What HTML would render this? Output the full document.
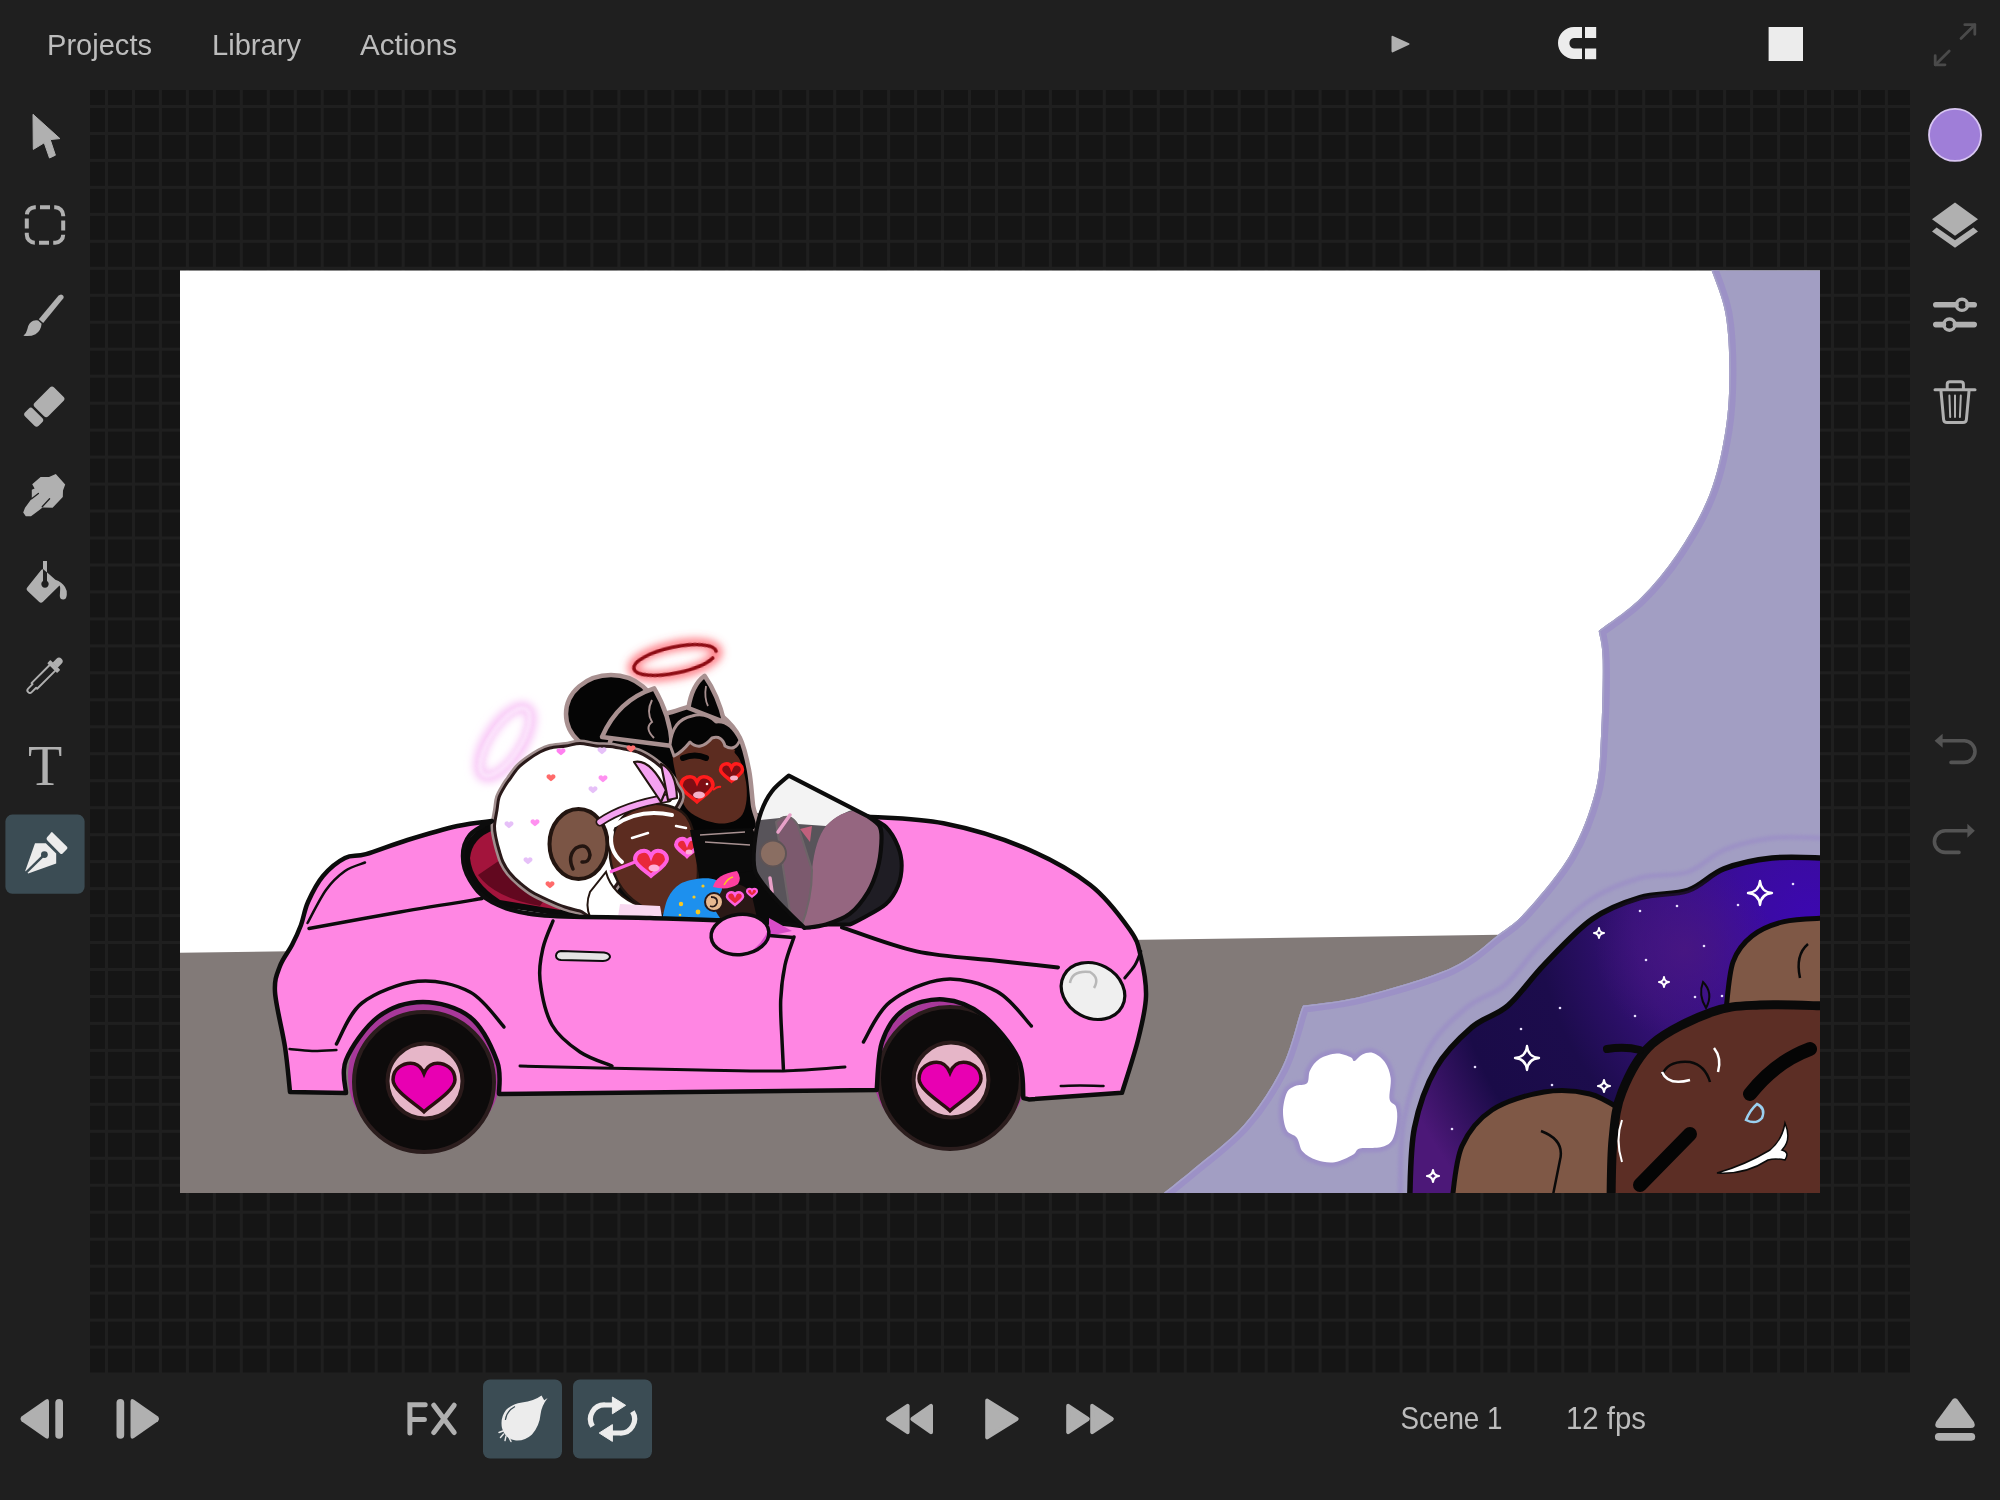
<!DOCTYPE html>
<html><head><meta charset="utf-8">
<style>
html,body{margin:0;padding:0;width:2000px;height:1500px;overflow:hidden;background:#1f1f1f;}
#grid{position:absolute;left:90px;top:90px;width:1820px;height:1283px;background-color:#151515;
background-image:linear-gradient(to right,#1f1f1f 3px,transparent 3px),linear-gradient(to bottom,#1f1f1f 3px,transparent 3px);
background-size:26.98px 26.98px;background-position:15px 15px;}
svg{position:absolute;left:0;top:0;}
text{font-family:"Liberation Sans",sans-serif;}
</style></head><body>
<div id="grid"></div>
<svg id="ui" width="2000" height="1500" viewBox="0 0 2000 1500">
  <defs><filter id="noop" x="0" y="0" width="1" height="1"><feColorMatrix type="identity"/></filter></defs>
  <!-- top menu -->
  <g fill="#bcbcbc" font-size="30" filter="url(#noop)">
    <text x="47" y="55" textLength="105" lengthAdjust="spacingAndGlyphs">Projects</text>
    <text x="212" y="55" textLength="89" lengthAdjust="spacingAndGlyphs">Library</text>
    <text x="360" y="55" textLength="97" lengthAdjust="spacingAndGlyphs">Actions</text>
  </g>
  <!-- top play -->
  <path d="M1393,36 Q1391.5,35 1391.5,37 L1391.5,51 Q1391.5,53 1393,52.3 L1409,44.8 Q1410.5,44 1409,43.2 Z" fill="#b0b0b0"/>
  <!-- magnet -->
  <g fill="#ececec">
    <path d="M1582,27 L1574,27 A16,16 0 0 0 1574,59 L1582,59 L1582,48.5 L1574,48.5 A5.3,5.3 0 0 1 1574,38 L1582,38 Z"/>
    <rect x="1585" y="27" width="11.2" height="11"/>
    <rect x="1585" y="48.5" width="11.2" height="10.7"/>
  </g>
  <!-- white square -->
  <rect x="1768.6" y="27" width="34.4" height="34" fill="#ececec"/>
  <!-- expand -->
  <g stroke="#4a4a4a" stroke-width="2.8" fill="none" stroke-linecap="round" stroke-linejoin="round">
    <path d="M1961,38.5 L1974.8,24.7"/><path d="M1964.8,24.7 L1974.8,24.7 L1974.8,34.3"/>
    <path d="M1949.2,51 L1935.4,64.8"/><path d="M1935.2,55.7 L1935.2,64.8 L1945,64.8"/>
  </g>

  <!-- left tools -->
  <g fill="#b0b0b0">
    <!-- arrow -->
    <path d="M33,114.3 L59.9,138.6 L50.2,139.6 L55.4,155.2 L49.5,158 L44.2,142.8 L33.3,149.4 Z" stroke="#b0b0b0" stroke-width="1" stroke-linejoin="round"/>
  </g>
  <!-- selection -->
  <rect x="26.8" y="207.2" width="36.4" height="35.6" rx="8" ry="8" fill="none" stroke="#b0b0b0" stroke-width="4" stroke-dasharray="14.57 4.2 10 4.2" stroke-dashoffset="13.57"/>
  <!-- brush -->
  <g fill="#b0b0b0">
    <path d="M61,294.4 Q64.2,295 63.6,298 L43.2,323 L38.8,319.2 L58.6,295.6 Z"/>
    <path d="M38.2,320.6 L41.6,323.8 Q41,331 35.5,334.2 Q30,337 23.4,335.7 Q26.5,333.6 27.4,329 Q28.6,322.6 33.2,320.8 Q36,319.6 38.2,320.6 Z"/>
  </g>
  <!-- eraser -->
  <g fill="#b0b0b0" transform="translate(44.3,406.6) rotate(-45)">
    <rect x="-7" y="-9.6" width="27.5" height="19.2" rx="3"/>
    <rect x="-20.5" y="-9.6" width="11" height="19.2" rx="3"/>
  </g>
  <!-- smudge -->
  <path fill="#b0b0b0" d="M55.8,474 L65.2,484.6 L63,490.6 L62.8,497 L52.6,507.8 L42.6,507.6 L31,516.2 L25.8,516.2 L23.2,512.6 L25,507.8 L31.8,498.6 L31.8,489.8 L34.6,488.6 L32.2,484.2 L40.6,477 L49,477 Z"/>
  <path d="M49.6,498.8 L42.2,506.8 M38.4,493.4 L31.6,498.8" stroke="#1f1f1f" stroke-width="1.3" stroke-linecap="round"/>
  <!-- bucket -->
  <g fill="#b0b0b0">
    <rect x="43" y="561" width="4" height="12"/>
    <path d="M41.4,569.8 Q42.6,568.6 43.8,569.6 L55.4,579.8 Q62,582 65,587 Q67.2,590.5 66.8,594.5 L66.6,596 Q66,599.5 63.2,599.5 Q60,599.5 59.8,596 L60.2,588.5 Q60.3,586.5 59.5,585.5 L43,601.8 Q41,603.6 39,601.8 L27.6,591 Q25.6,589 27.6,587 Z"/>
    <path d="M43,568.9 L47,572.4 L47,581 A3.7,3.7 0 1 1 43,581 Z" fill="#1f1f1f"/>
  </g>
  <!-- eyedropper -->
  <g transform="translate(44.85,675.45) rotate(-45)" fill="none" stroke="#b0b0b0">
    <path d="M10.8,-4 L-14.85,-4 L-14.85,-2.5 L-21.1,-2.5 A2.5,2.5 0 0 0 -21.1,2.5 L-14.85,2.5 L-14.85,4 L10.8,4" stroke-width="1.9" stroke-linejoin="round"/>
    <rect x="10.3" y="-7" width="4.5" height="14" rx="0.8" fill="#b0b0b0" stroke="none"/>
    <path d="M14.5,-3.6 L20,-3.6 A3.6,3.6 0 0 1 20,3.6 L14.5,3.6 Z" fill="#b0b0b0" stroke="none"/>
  </g>
  <!-- T -->
  <text x="45" y="784.5" text-anchor="middle" font-family="Liberation Serif" font-size="56" fill="#b0b0b0" style="font-family:'Liberation Serif',serif">T</text>
  <!-- pen selected -->
  <rect x="5.4" y="814.6" width="79.2" height="79.2" rx="7" fill="#3b4c54"/>
  <g fill="#ececec">
    <path d="M52,832 L67,846.8 Q68,848 67,849 L62.6,853.4 Q61.4,854.4 60.2,853.4 L47.4,840.6 Q45.8,839 47,837.2 L50,834 Q51,832 52,832 Z"/>
    <path d="M35,843.2 L45.8,843.2 L56.2,853.6 L56.2,863.6 L28.2,873.6 L25.2,871 Z"/>
  </g>
  <g stroke="#3b4c54" stroke-width="2.4" fill="#3b4c54">
    <path d="M26,872.6 L44.4,854.6" fill="none"/>
    <circle cx="44.4" cy="854.6" r="3.4" stroke="none"/>
  </g>

  <!-- right side -->
  <circle cx="1955" cy="134.9" r="26" fill="#9f7ed8" stroke="#d8c6f2" stroke-width="1.8"/>
  <g fill="#b0b0b0">
    <path d="M1955,202.6 L1978,219.2 L1955,235.8 L1932,219.2 Z"/>
    <path d="M1932,231.4 L1936.6,227.6 L1955,240.3 L1973.4,227.6 L1978,231.4 L1955,247.8 Z"/>
  </g>
  <g stroke="#b0b0b0" fill="none">
    <path d="M1935.8,304.8 L1956,304.8 M1968,304.8 L1974.2,304.8" stroke-width="5.6" stroke-linecap="round"/>
    <circle cx="1962" cy="304.8" r="5.6" stroke-width="3.4"/>
    <path d="M1935.8,324.6 L1943.4,324.6 M1955.4,324.6 L1974.2,324.6" stroke-width="5.6" stroke-linecap="round"/>
    <circle cx="1949.4" cy="324.6" r="5.6" stroke-width="3.4"/>
  </g>
  <g stroke="#b0b0b0" fill="none" stroke-width="3" stroke-linecap="round" stroke-linejoin="round">
    <path d="M1935,389.8 L1975,389.8"/>
    <path d="M1947.2,389.2 L1947.2,384.5 Q1947.2,381.8 1950,381.8 L1960.6,381.8 Q1963.4,381.8 1963.4,384.5 L1963.4,389.2"/>
    <path d="M1941,391.2 L1943.6,419.6 Q1944,422.6 1947,422.6 L1963,422.6 Q1966,422.6 1966.4,419.6 L1969,391.2"/>
    <path d="M1949.4,395.6 L1950.2,417 M1955,395.6 L1955,417 M1960.8,395.6 L1959.9,417" stroke-width="2"/>
  </g>
  <!-- undo redo -->
  <g stroke="#545454" fill="none" stroke-width="3.6" stroke-linecap="round">
    <path d="M1941,740.8 L1964.2,740.8 A10.8,10.8 0 0 1 1964.2,762.4 L1951,762.4"/>
    <path d="M1969,830.8 L1945.2,830.8 A10.8,10.8 0 0 0 1945.2,852.4 L1959,852.4"/>
  </g>
  <g fill="#545454">
    <path d="M1934.6,740.8 L1942.6,733.8 L1942.6,747.8 Z"/>
    <path d="M1974.8,830.8 L1967.4,823.8 L1967.4,837.8 Z"/>
  </g>

  <!-- bottom bar -->
  <g fill="#b0b0b0">
    <path d="M21.5,1416.6 Q19.5,1418.9 21.5,1421.2 L45.5,1438 Q49,1440 49,1436 L49,1401.6 Q49,1397.6 45.5,1399.8 Z"/>
    <rect x="55.3" y="1399" width="7.7" height="39.8" rx="3.8"/>
    <path d="M158,1416.6 Q160,1418.9 158,1421.2 L134,1438 Q130.5,1440 130.5,1436 L130.5,1401.6 Q130.5,1397.6 134,1399.8 Z"/>
    <rect x="116.5" y="1399" width="7.7" height="39.8" rx="3.8"/>
  </g>
  <g stroke="#b0b0b0" stroke-width="5" stroke-linecap="round" fill="none">
    <path d="M409.9,1433 L409.9,1404.8 L425.2,1404.8 M409.9,1419.5 L424.4,1419.5"/>
    <path d="M433.8,1405.2 L454.2,1432.6 M454.2,1405.2 L433.8,1432.6"/>
  </g>
  <rect x="483" y="1379.5" width="79" height="79" rx="7" fill="#3b4c54"/>
  <rect x="573" y="1379.5" width="79" height="79" rx="7" fill="#3b4c54"/>
  <!-- onion -->
  <g fill="#ececec">
    <path d="M541.5,1395.5 L544.2,1400.2 L547.6,1398 Q541.5,1406 540.6,1414 Q539.5,1426 532,1434.5 Q525,1441 516,1440.5 Q505,1439 502,1428 Q500,1418 506,1410 Q512,1404 522,1402.5 Q534,1401 541.5,1395.5 Z"/>
    <path d="M503,1431 L499,1432.5 M503.5,1434 L500.5,1437.5 M506,1436 L505,1440.5 M509,1437.5 L511,1441.5" stroke="#ececec" stroke-width="1.4" stroke-linecap="round"/>
  </g>
  <path d="M505.4,1420 Q506.5,1411 515,1406.5" stroke="#3b4c54" stroke-width="1.2" fill="none"/>
  <!-- loop -->
  <g stroke="#ececec" stroke-width="5.2" fill="none">
    <path d="M592.6,1426.4 A14,14 0 0 1 605.4,1405 L613,1405"/>
    <path d="M632.4,1411.6 A14,14 0 0 1 619.6,1433 L612,1433"/>
  </g>
  <g fill="#ececec">
    <path d="M612.4,1397 L625.6,1405.3 L612.4,1413.8 Z" stroke="#ececec" stroke-width="1" stroke-linejoin="round"/>
    <path d="M612.4,1424.6 L599.2,1433 L612.4,1441.4 Z" stroke="#ececec" stroke-width="1" stroke-linejoin="round"/>
  </g>
  <!-- transport -->
  <g fill="#b0b0b0" stroke="#b0b0b0" stroke-width="4" stroke-linejoin="round">
    <path d="M888,1419 L907.6,1405.8 L907.6,1432.2 Z"/>
    <path d="M912.4,1419 L931,1405.8 L931,1432.2 Z"/>
    <path d="M987.2,1400.6 L1016.6,1419 L987.2,1437.4 Z"/>
    <path d="M1068.2,1405.8 L1087.8,1419 L1068.2,1432.2 Z"/>
    <path d="M1092.2,1405.8 L1111.8,1419 L1092.2,1432.2 Z"/>
  </g>
  <g fill="#bcbcbc" font-size="30.5" filter="url(#noop)">
    <text x="1400.5" y="1429" textLength="102" lengthAdjust="spacingAndGlyphs">Scene 1</text>
    <text x="1566" y="1429" textLength="80" lengthAdjust="spacingAndGlyphs">12 fps</text>
  </g>
  <g fill="#b0b0b0">
    <path d="M1952.5,1399.5 Q1955,1396.8 1957.5,1399.5 L1974,1422 Q1976.5,1428 1970.5,1428 L1939.5,1428 Q1933.5,1428 1936,1422 Z"/>
    <rect x="1934.9" y="1433" width="40.3" height="7.7" rx="3.85"/>
  </g>
<!--CANVAS-->
<defs><clipPath id="cv"><rect x="180" y="270.5" width="1640" height="922.5"/></clipPath>
<filter id="glow" x="-50%" y="-50%" width="200%" height="200%"><feGaussianBlur stdDeviation="4"/></filter>
<filter id="blur2"><feGaussianBlur stdDeviation="1.5"/></filter>
<radialGradient id="gal" gradientUnits="userSpaceOnUse" cx="1810" cy="915" r="440"><stop offset="0" stop-color="#3c08b0"/><stop offset="0.18" stop-color="#3a0c9c"/><stop offset="0.4" stop-color="#36117a"/><stop offset="0.62" stop-color="#1c0c4c"/><stop offset="0.82" stop-color="#1a0b48"/><stop offset="1" stop-color="#4c1878"/></radialGradient><radialGradient id="gal2" gradientUnits="userSpaceOnUse" cx="1685" cy="950" r="90"><stop offset="0" stop-color="#4a1880" stop-opacity="0.8"/><stop offset="1" stop-color="#4a1880" stop-opacity="0"/></radialGradient>
</defs>
<g clip-path="url(#cv)">
<rect x="180" y="270" width="1640" height="923" fill="#ffffff"/>
<path d="M180,952.8 L1500,934.8 L1500,1193 L180,1193 Z" fill="#827a78"/>
<defs><clipPath id="cl"><path d="M1710.7,268.0 C1713.2,275.6 1722.3,296.1 1725.4,313.4 C1728.5,330.7 1729.4,352.4 1729.4,372.0 C1729.4,391.6 1728.7,410.3 1725.4,430.8 C1722.1,451.3 1717.4,474.4 1709.4,494.8 C1701.4,515.2 1689.0,536.2 1677.4,553.5 C1665.8,570.8 1653.1,585.9 1640.0,598.8 C1626.9,611.7 1605.6,625.5 1598.7,630.9 L1598.7,630.9 C1599.4,635.8 1602.3,642.5 1602.7,660.0 C1603.1,677.5 1602.3,713.9 1601.0,736.0 C1599.7,758.1 1600.2,772.8 1595.0,792.6 C1589.8,812.4 1581.5,835.2 1570.0,855.0 C1558.5,874.8 1538.0,898.3 1526.0,911.6 C1514.0,924.9 1510.5,925.6 1498.0,935.0 C1485.5,944.4 1473.5,957.8 1451.0,968.0 C1428.5,978.2 1387.6,989.7 1363.0,996.0 C1338.4,1002.3 1313.5,1004.0 1303.6,1005.6 L1303.6,1005.6 C1303.1,1006.7 1304.2,1001.6 1300.5,1012.0 C1296.8,1022.4 1291.1,1049.2 1281.7,1068.0 C1272.3,1086.8 1258.6,1108.0 1244.0,1124.7 C1229.4,1141.5 1208.0,1156.6 1194.0,1168.5 C1180.0,1180.4 1165.7,1191.4 1160.0,1196.0 L1822,1196 L1822,268 Z"/></clipPath></defs>
<path d="M1710.7,268.0 C1713.2,275.6 1722.3,296.1 1725.4,313.4 C1728.5,330.7 1729.4,352.4 1729.4,372.0 C1729.4,391.6 1728.7,410.3 1725.4,430.8 C1722.1,451.3 1717.4,474.4 1709.4,494.8 C1701.4,515.2 1689.0,536.2 1677.4,553.5 C1665.8,570.8 1653.1,585.9 1640.0,598.8 C1626.9,611.7 1605.6,625.5 1598.7,630.9 L1598.7,630.9 C1599.4,635.8 1602.3,642.5 1602.7,660.0 C1603.1,677.5 1602.3,713.9 1601.0,736.0 C1599.7,758.1 1600.2,772.8 1595.0,792.6 C1589.8,812.4 1581.5,835.2 1570.0,855.0 C1558.5,874.8 1538.0,898.3 1526.0,911.6 C1514.0,924.9 1510.5,925.6 1498.0,935.0 C1485.5,944.4 1473.5,957.8 1451.0,968.0 C1428.5,978.2 1387.6,989.7 1363.0,996.0 C1338.4,1002.3 1313.5,1004.0 1303.6,1005.6 L1303.6,1005.6 C1303.1,1006.7 1304.2,1001.6 1300.5,1012.0 C1296.8,1022.4 1291.1,1049.2 1281.7,1068.0 C1272.3,1086.8 1258.6,1108.0 1244.0,1124.7 C1229.4,1141.5 1208.0,1156.6 1194.0,1168.5 C1180.0,1180.4 1165.7,1191.4 1160.0,1196.0 L1822,1196 L1822,268 Z" fill="#a29ec3"/>
<g clip-path="url(#cl)"><path d="M1710.7,268.0 C1713.2,275.6 1722.3,296.1 1725.4,313.4 C1728.5,330.7 1729.4,352.4 1729.4,372.0 C1729.4,391.6 1728.7,410.3 1725.4,430.8 C1722.1,451.3 1717.4,474.4 1709.4,494.8 C1701.4,515.2 1689.0,536.2 1677.4,553.5 C1665.8,570.8 1653.1,585.9 1640.0,598.8 C1626.9,611.7 1605.6,625.5 1598.7,630.9 L1598.7,630.9 C1599.4,635.8 1602.3,642.5 1602.7,660.0 C1603.1,677.5 1602.3,713.9 1601.0,736.0 C1599.7,758.1 1600.2,772.8 1595.0,792.6 C1589.8,812.4 1581.5,835.2 1570.0,855.0 C1558.5,874.8 1538.0,898.3 1526.0,911.6 C1514.0,924.9 1510.5,925.6 1498.0,935.0 C1485.5,944.4 1473.5,957.8 1451.0,968.0 C1428.5,978.2 1387.6,989.7 1363.0,996.0 C1338.4,1002.3 1313.5,1004.0 1303.6,1005.6 L1303.6,1005.6 C1303.1,1006.7 1304.2,1001.6 1300.5,1012.0 C1296.8,1022.4 1291.1,1049.2 1281.7,1068.0 C1272.3,1086.8 1258.6,1108.0 1244.0,1124.7 C1229.4,1141.5 1208.0,1156.6 1194.0,1168.5 C1180.0,1180.4 1165.7,1191.4 1160.0,1196.0" fill="none" stroke="#9b8fc6" stroke-width="14" opacity="0.9"/>
<path d="M1710.7,268.0 C1713.2,275.6 1722.3,296.1 1725.4,313.4 C1728.5,330.7 1729.4,352.4 1729.4,372.0 C1729.4,391.6 1728.7,410.3 1725.4,430.8 C1722.1,451.3 1717.4,474.4 1709.4,494.8 C1701.4,515.2 1689.0,536.2 1677.4,553.5 C1665.8,570.8 1653.1,585.9 1640.0,598.8 C1626.9,611.7 1605.6,625.5 1598.7,630.9 L1598.7,630.9 C1599.4,635.8 1602.3,642.5 1602.7,660.0 C1603.1,677.5 1602.3,713.9 1601.0,736.0 C1599.7,758.1 1600.2,772.8 1595.0,792.6 C1589.8,812.4 1581.5,835.2 1570.0,855.0 C1558.5,874.8 1538.0,898.3 1526.0,911.6 C1514.0,924.9 1510.5,925.6 1498.0,935.0 C1485.5,944.4 1473.5,957.8 1451.0,968.0 C1428.5,978.2 1387.6,989.7 1363.0,996.0 C1338.4,1002.3 1313.5,1004.0 1303.6,1005.6 L1303.6,1005.6 C1303.1,1006.7 1304.2,1001.6 1300.5,1012.0 C1296.8,1022.4 1291.1,1049.2 1281.7,1068.0 C1272.3,1086.8 1258.6,1108.0 1244.0,1124.7 C1229.4,1141.5 1208.0,1156.6 1194.0,1168.5 C1180.0,1180.4 1165.7,1191.4 1160.0,1196.0" fill="none" stroke="#a6a2c8" stroke-width="3"/></g>
<path d="M1307.0,1083.3 C1309.5,1080.7 1307.9,1074.6 1310.0,1070.5 C1312.1,1066.4 1315.2,1061.6 1319.7,1058.8 C1324.2,1056.0 1331.6,1053.8 1336.8,1053.5 C1342.0,1053.2 1347.8,1056.0 1350.7,1057.2 C1353.6,1058.5 1352.5,1061.5 1354.4,1061.0 C1356.4,1060.5 1359.3,1055.8 1362.4,1054.5 C1365.5,1053.2 1369.3,1051.8 1373.0,1053.0 C1376.7,1054.2 1381.8,1057.8 1384.8,1062.0 C1387.8,1066.2 1389.9,1071.8 1390.7,1078.0 C1391.5,1084.2 1388.7,1094.5 1389.6,1099.3 C1390.5,1104.1 1394.8,1103.2 1396.0,1106.8 C1397.2,1110.4 1397.6,1115.2 1397.0,1120.7 C1396.4,1126.2 1395.0,1135.5 1392.3,1139.9 C1389.5,1144.3 1385.9,1145.9 1380.5,1147.3 C1375.1,1148.7 1364.3,1147.2 1359.7,1148.4 C1355.1,1149.7 1357.0,1152.5 1352.8,1154.8 C1348.6,1157.1 1340.8,1161.4 1334.7,1162.3 C1328.7,1163.2 1321.8,1161.9 1316.5,1160.1 C1311.2,1158.3 1306.0,1155.3 1302.7,1151.6 C1299.4,1147.9 1299.5,1141.2 1296.8,1137.7 C1294.1,1134.2 1289.0,1134.6 1286.7,1130.3 C1284.4,1126.0 1283.0,1118.3 1283.0,1112.1 C1283.0,1105.9 1284.7,1097.3 1286.7,1093.0 C1288.7,1088.7 1291.8,1087.6 1295.2,1086.0 C1298.6,1084.4 1304.5,1085.9 1307.0,1083.3 Z" fill="none" stroke="#9b8fc6" stroke-width="9" filter="url(#blur2)"/>
<path d="M1307.0,1083.3 C1309.5,1080.7 1307.9,1074.6 1310.0,1070.5 C1312.1,1066.4 1315.2,1061.6 1319.7,1058.8 C1324.2,1056.0 1331.6,1053.8 1336.8,1053.5 C1342.0,1053.2 1347.8,1056.0 1350.7,1057.2 C1353.6,1058.5 1352.5,1061.5 1354.4,1061.0 C1356.4,1060.5 1359.3,1055.8 1362.4,1054.5 C1365.5,1053.2 1369.3,1051.8 1373.0,1053.0 C1376.7,1054.2 1381.8,1057.8 1384.8,1062.0 C1387.8,1066.2 1389.9,1071.8 1390.7,1078.0 C1391.5,1084.2 1388.7,1094.5 1389.6,1099.3 C1390.5,1104.1 1394.8,1103.2 1396.0,1106.8 C1397.2,1110.4 1397.6,1115.2 1397.0,1120.7 C1396.4,1126.2 1395.0,1135.5 1392.3,1139.9 C1389.5,1144.3 1385.9,1145.9 1380.5,1147.3 C1375.1,1148.7 1364.3,1147.2 1359.7,1148.4 C1355.1,1149.7 1357.0,1152.5 1352.8,1154.8 C1348.6,1157.1 1340.8,1161.4 1334.7,1162.3 C1328.7,1163.2 1321.8,1161.9 1316.5,1160.1 C1311.2,1158.3 1306.0,1155.3 1302.7,1151.6 C1299.4,1147.9 1299.5,1141.2 1296.8,1137.7 C1294.1,1134.2 1289.0,1134.6 1286.7,1130.3 C1284.4,1126.0 1283.0,1118.3 1283.0,1112.1 C1283.0,1105.9 1284.7,1097.3 1286.7,1093.0 C1288.7,1088.7 1291.8,1087.6 1295.2,1086.0 C1298.6,1084.4 1304.5,1085.9 1307.0,1083.3 Z" fill="#ffffff"/>
<path d="M1400.0,1200.0 C1400.7,1186.7 1399.3,1145.0 1404.0,1120.0 C1408.7,1095.0 1417.7,1068.7 1428.0,1050.0 C1438.3,1031.3 1453.2,1018.8 1466.0,1008.0 C1478.8,997.2 1492.7,995.5 1505.0,985.0 C1517.3,974.5 1525.8,959.2 1540.0,945.0 C1554.2,930.8 1573.3,911.2 1590.0,900.0 C1606.7,888.8 1623.7,882.7 1640.0,878.0 C1656.3,873.3 1674.0,876.7 1688.0,872.0 C1702.0,867.3 1710.0,855.7 1724.0,850.0 C1738.0,844.3 1755.2,840.0 1772.0,838.0 C1788.8,836.0 1816.2,838.0 1825.0,838.0" fill="none" stroke="#9b8fc6" stroke-width="5" opacity="0.8" filter="url(#blur2)"/>
<path d="M1409.6,1200.0 C1410.4,1188.0 1410.0,1150.0 1414.4,1128.0 C1418.8,1106.0 1426.4,1084.8 1436.0,1068.0 C1445.6,1051.2 1460.0,1037.6 1472.0,1027.2 C1484.0,1016.8 1496.0,1016.0 1508.0,1005.6 C1520.0,995.2 1530.0,979.2 1544.0,964.8 C1558.0,950.4 1576.0,930.4 1592.0,919.2 C1608.0,908.0 1624.0,902.4 1640.0,897.6 C1656.0,892.8 1674.0,895.2 1688.0,890.4 C1702.0,885.6 1710.0,874.2 1724.0,868.8 C1738.0,863.4 1755.2,859.8 1772.0,858.0 C1788.8,856.2 1816.2,858.0 1825.0,858.0 L1825,1200 Z" fill="url(#gal)" stroke="#0a0a0a" stroke-width="5.5"/>
<path d="M1409.6,1200.0 C1410.4,1188.0 1410.0,1150.0 1414.4,1128.0 C1418.8,1106.0 1426.4,1084.8 1436.0,1068.0 C1445.6,1051.2 1460.0,1037.6 1472.0,1027.2 C1484.0,1016.8 1496.0,1016.0 1508.0,1005.6 C1520.0,995.2 1530.0,979.2 1544.0,964.8 C1558.0,950.4 1576.0,930.4 1592.0,919.2 C1608.0,908.0 1624.0,902.4 1640.0,897.6 C1656.0,892.8 1674.0,895.2 1688.0,890.4 C1702.0,885.6 1710.0,874.2 1724.0,868.8 C1738.0,863.4 1755.2,859.8 1772.0,858.0 C1788.8,856.2 1816.2,858.0 1825.0,858.0 L1825,1200 Z" fill="url(#gal2)"/>
<path d="M1527.0,1046.0 Q1528.0,1057.0 1539.0,1058.0 Q1528.0,1059.0 1527.0,1070.0 Q1526.0,1059.0 1515.0,1058.0 Q1526.0,1057.0 1527.0,1046.0 Z" fill="none" stroke="#fff" stroke-width="2.4" stroke-linejoin="round"/>
<path d="M1760.0,881.0 Q1761.0,892.0 1772.0,893.0 Q1761.0,894.0 1760.0,905.0 Q1759.0,894.0 1748.0,893.0 Q1759.0,892.0 1760.0,881.0 Z" fill="none" stroke="#fff" stroke-width="2.4" stroke-linejoin="round"/>
<path d="M1599.0,928.0 Q1599.4,932.6 1604.0,933.0 Q1599.4,933.4 1599.0,938.0 Q1598.6,933.4 1594.0,933.0 Q1598.6,932.6 1599.0,928.0 Z" fill="none" stroke="#fff" stroke-width="2.0" stroke-linejoin="round"/>
<path d="M1664.0,977.0 Q1664.4,981.6 1669.0,982.0 Q1664.4,982.4 1664.0,987.0 Q1663.6,982.4 1659.0,982.0 Q1663.6,981.6 1664.0,977.0 Z" fill="none" stroke="#fff" stroke-width="2.0" stroke-linejoin="round"/>
<path d="M1604.0,1080.0 Q1604.5,1085.5 1610.0,1086.0 Q1604.5,1086.5 1604.0,1092.0 Q1603.5,1086.5 1598.0,1086.0 Q1603.5,1085.5 1604.0,1080.0 Z" fill="none" stroke="#fff" stroke-width="2.2" stroke-linejoin="round"/>
<path d="M1433.0,1170.0 Q1433.5,1175.5 1439.0,1176.0 Q1433.5,1176.5 1433.0,1182.0 Q1432.5,1176.5 1427.0,1176.0 Q1432.5,1175.5 1433.0,1170.0 Z" fill="none" stroke="#fff" stroke-width="2.2" stroke-linejoin="round"/>
<circle cx="1640" cy="911" r="1.3" fill="#e8e0ff"/>
<circle cx="1677" cy="906" r="1.3" fill="#e8e0ff"/>
<circle cx="1738" cy="905" r="1.3" fill="#e8e0ff"/>
<circle cx="1793" cy="884" r="1.3" fill="#e8e0ff"/>
<circle cx="1704" cy="946" r="1.3" fill="#e8e0ff"/>
<circle cx="1646" cy="960" r="1.3" fill="#e8e0ff"/>
<circle cx="1560" cy="1008" r="1.3" fill="#e8e0ff"/>
<circle cx="1521" cy="1029" r="1.3" fill="#e8e0ff"/>
<circle cx="1635" cy="1016" r="1.3" fill="#e8e0ff"/>
<circle cx="1475" cy="1067" r="1.3" fill="#e8e0ff"/>
<circle cx="1452" cy="1129" r="1.3" fill="#e8e0ff"/>
<circle cx="1552" cy="1085" r="1.3" fill="#e8e0ff"/>
<circle cx="1695" cy="997" r="1.3" fill="#e8e0ff"/>
<circle cx="1722" cy="996" r="1.3" fill="#e8e0ff"/>
<path d="M1726.0,1010.0 C1727.2,1002.0 1728.7,974.3 1733.0,962.0 C1737.3,949.7 1743.5,942.7 1752.0,936.0 C1760.5,929.3 1771.8,924.6 1784.0,921.6 C1796.2,918.6 1818.2,918.6 1825.0,918.0 L1825,1010 Z" fill="#7f5846" stroke="#0a0a0a" stroke-width="5"/>
<path d="M1808,944 Q1795,955 1800,978" fill="none" stroke="#0a0a0a" stroke-width="2.5"/>
<path d="M1452.0,1200.0 C1453.7,1191.0 1455.3,1161.0 1462.0,1146.0 C1468.7,1131.0 1478.3,1119.0 1492.0,1110.0 C1505.7,1101.0 1527.7,1094.7 1544.0,1092.0 C1560.3,1089.3 1576.5,1090.7 1590.0,1094.0 C1603.5,1097.3 1619.2,1109.0 1625.0,1112.0 L1625,1200 Z" fill="#7f5846" stroke="#0a0a0a" stroke-width="5"/>
<path d="M1541,1131 Q1565,1140 1560,1160 Q1556,1180 1553,1195" fill="none" stroke="#0a0a0a" stroke-width="2.5"/>
<path d="M1611.0,1200.0 C1611.3,1190.0 1611.2,1158.0 1613.0,1140.0 C1614.8,1122.0 1615.5,1108.0 1622.0,1092.0 C1628.5,1076.0 1637.0,1057.3 1652.0,1044.0 C1667.0,1030.7 1694.0,1018.5 1712.0,1012.0 C1730.0,1005.5 1741.2,1006.0 1760.0,1005.0 C1778.8,1004.0 1814.2,1005.8 1825.0,1006.0 L1825,1200 Z" fill="#5c2e25" stroke="#0a0a0a" stroke-width="9"/>
<path d="M1703,982 Q1698,995 1706,1008 Q1714,993 1703,982 Z" fill="none" stroke="#0a0a0a" stroke-width="2"/>
<path d="M1607,1049 Q1625,1046 1640,1050" stroke="#0a0a0a" stroke-width="8" stroke-linecap="round"/>
<path d="M1640,1185 L1690,1134" stroke="#050505" stroke-width="14" stroke-linecap="round"/>
<path d="M1750,1094 Q1775,1062 1810,1049" stroke="#050505" stroke-width="14" stroke-linecap="round" fill="none"/>
<path d="M1662,1075 Q1668,1060 1690,1062 Q1705,1065 1710,1082" stroke="#0a0a0a" stroke-width="2.5" fill="none"/>
<path d="M1662,1072 Q1668,1086 1690,1080" stroke="#ffffff" stroke-width="2.5" fill="none"/>
<path d="M1714,1048 Q1722,1058 1718,1072" stroke="#ffffff" stroke-width="2.5" fill="none"/>
<path d="M1622,1120 Q1615,1140 1622,1162" stroke="#ffffff" stroke-width="2" fill="none"/>
<path d="M1757,1104 Q1766,1108 1762,1118 Q1756,1125 1746,1120 Q1750,1110 1757,1104 Z" fill="none" stroke="#9ad0f0" stroke-width="2.5"/>
<path d="M1717,1173 Q1745,1165 1770,1150 Q1782,1140 1785,1123 Q1792,1140 1782,1150 Q1790,1152 1785,1160 Q1775,1158 1768,1160 Q1745,1175 1717,1173 Z" fill="#ffffff" stroke="#0a0a0a" stroke-width="1.5"/>
<g filter="url(#glow)"><ellipse cx="675" cy="660" rx="43" ry="14" transform="rotate(-12 675 660)" fill="none" stroke="#ff4d5a" stroke-width="10" opacity="0.75"/>
<ellipse cx="505" cy="742" rx="40" ry="17" transform="rotate(-57 505 742)" fill="none" stroke="#f6b4f4" stroke-width="11" opacity="0.8"/></g>
<ellipse cx="675" cy="660" rx="42" ry="13" transform="rotate(-12 675 660)" fill="none" stroke="#8e0c14" stroke-width="3.5" stroke-dasharray="215 50" stroke-dashoffset="-8" stroke-linecap="round"/>
<ellipse cx="505" cy="742" rx="39" ry="15" transform="rotate(-57 505 742)" fill="none" stroke="#fbe2fb" stroke-width="5" filter="url(#blur2)"/>
<path d="M492,823 Q466,832 463,856 Q464,885 495,906 L560,916 L810,928 L830,830 L700,800 L600,790 Z" fill="#0a0a0a"/>
<path d="M494,830 Q472,838 470,858 Q472,882 500,900 L560,910 L600,840 Z" fill="#a3143c"/>
<path d="M478,875 Q495,898 540,906 L555,885 Q520,880 500,860 Z" fill="#62081f"/>
<ellipse cx="611" cy="714" rx="45" ry="39" fill="#050505" stroke="#a89090" stroke-width="4.5"/>
<path d="M610.0,742.0 C611.7,734.0 629.7,727.0 640.0,722.0 C650.3,717.0 662.0,714.8 672.0,712.0 C682.0,709.2 691.7,704.3 700.0,705.0 C708.3,705.7 715.3,710.5 722.0,716.0 C728.7,721.5 735.5,729.0 740.0,738.0 C744.5,747.0 746.8,758.8 749.0,770.0 C751.2,781.2 751.8,795.0 753.0,805.0 C754.2,815.0 761.5,824.5 756.0,830.0 C750.5,835.5 732.7,837.7 720.0,838.0 C707.3,838.3 691.7,838.3 680.0,832.0 C668.3,825.7 658.3,810.3 650.0,800.0 C641.7,789.7 636.7,779.7 630.0,770.0 C623.3,760.3 608.3,750.0 610.0,742.0 Z" fill="#050505" stroke="#a89090" stroke-width="4.5" stroke-linejoin="round"/>
<path d="M602,737 Q618,700 654.2,688.4 Q670,715 672.2,746 Z" fill="#050505" stroke="#a89090" stroke-width="4.5" stroke-linejoin="round"/>
<path d="M652,700 Q646,712 652,722 Q644,728 654,738" fill="none" stroke="#a89090" stroke-width="2"/>
<path d="M688.4,708 Q692,685 704.6,675.8 Q718,695 724.4,722 Z" fill="#050505" stroke="#a89090" stroke-width="4.5" stroke-linejoin="round"/>
<path d="M706,686 Q704,698 708,706" fill="none" stroke="#a89090" stroke-width="1.8"/>
<path d="M674.0,746.0 C677.9,738.5 691.4,737.0 701.0,737.0 C710.6,737.0 724.1,738.5 731.6,746.0 C739.1,753.5 744.2,770.6 746.0,782.0 C747.8,793.4 746.9,807.5 742.4,814.4 C737.9,821.3 728.0,824.0 719.0,823.4 C710.0,822.8 695.3,817.7 688.4,810.8 C681.5,803.9 680.0,792.8 677.6,782.0 C675.2,771.2 670.1,753.5 674.0,746.0 Z" fill="#5c2c20"/>
<path d="M670,745 Q672,720 692,716 Q706,712 716,722 Q730,720 740,740 Q735,752 725,746 Q722,735 712,738 Q700,752 690,742 Q682,752 674,756 Z" fill="#050505" stroke="#a89090" stroke-width="3" stroke-linejoin="round"/>
<path d="M683,758 Q695,753 706,758" stroke="#050505" stroke-width="6" stroke-linecap="round" fill="none"/>
<path d="M736,752 L741,758" stroke="#050505" stroke-width="3" stroke-linecap="round"/>
<path transform="translate(697.0,790.0) scale(0.533)" d="M0,22 C-6,16 -30,2 -30,-9 C-30,-20 -20,-25 -13,-25 C-6,-25 -2,-20 0,-15 C2,-20 6,-25 13,-25 C20,-25 30,-20 30,-9 C30,2 6,16 0,22 Z" fill="#7e0e14" stroke="#ff1c1c" stroke-width="6.6"/>
<path transform="translate(731.5,773.0) scale(0.367)" d="M0,22 C-6,16 -30,2 -30,-9 C-30,-20 -20,-25 -13,-25 C-6,-25 -2,-20 0,-15 C2,-20 6,-25 13,-25 C20,-25 30,-20 30,-9 C30,2 6,16 0,22 Z" fill="#7e0e14" stroke="#ff1c1c" stroke-width="9.5"/>
<ellipse cx="699" cy="795" rx="6" ry="3.5" fill="#f6b0c8"/><ellipse cx="734" cy="778" rx="4" ry="2.5" fill="#f6b0c8"/><circle cx="707" cy="784" r="1.3" fill="#fff"/>
<path d="M713,790 Q718,786 721,787" stroke="#ff1c1c" stroke-width="2" fill="none"/>
<path d="M494.5,826.0 C494.7,821.3 496.2,814.8 497.0,810.0 C497.8,805.2 497.7,801.5 499.0,797.5 C500.3,793.5 503.2,789.0 505.0,786.0 C506.8,783.0 507.3,782.5 509.5,779.5 C511.7,776.5 515.0,771.2 518.0,768.0 C521.0,764.8 523.8,762.7 527.5,760.0 C531.2,757.3 536.2,754.0 540.0,752.0 C543.8,750.0 545.7,749.0 550.0,748.0 C554.3,747.0 561.0,746.8 566.0,746.0 C571.0,745.2 575.0,743.5 580.0,743.5 C585.0,743.5 591.0,745.5 596.0,746.0 C601.0,746.5 605.3,746.0 610.0,746.5 C614.7,747.0 619.0,747.9 624.0,749.0 C629.0,750.1 634.8,750.8 640.0,753.0 C645.2,755.2 650.3,758.5 655.0,762.0 C659.7,765.5 664.5,770.0 668.0,774.0 C671.5,778.0 674.0,781.7 676.0,786.0 C678.0,790.3 682.7,792.7 680.0,800.0 C677.3,807.3 670.0,816.7 660.0,830.0 C650.0,843.3 630.8,865.9 620.0,880.0 C609.2,894.1 601.7,909.3 595.0,914.5 C588.3,919.7 585.0,912.2 580.0,911.0 C575.0,909.8 570.3,908.8 565.0,907.0 C559.7,905.2 553.5,902.5 548.0,900.0 C542.5,897.5 536.7,894.8 532.0,892.0 C527.3,889.2 523.8,886.2 520.0,883.0 C516.2,879.8 512.3,876.0 509.5,872.5 C506.7,869.0 504.8,865.8 503.0,862.0 C501.2,858.2 500.2,854.0 499.0,850.0 C497.8,846.0 496.8,842.0 496.0,838.0 C495.2,834.0 494.3,830.7 494.5,826.0 Z" fill="#ffffff" stroke="#a08e8e" stroke-width="8" stroke-linejoin="round"/>
<path d="M494.5,826.0 C494.7,821.3 496.2,814.8 497.0,810.0 C497.8,805.2 497.7,801.5 499.0,797.5 C500.3,793.5 503.2,789.0 505.0,786.0 C506.8,783.0 507.3,782.5 509.5,779.5 C511.7,776.5 515.0,771.2 518.0,768.0 C521.0,764.8 523.8,762.7 527.5,760.0 C531.2,757.3 536.2,754.0 540.0,752.0 C543.8,750.0 545.7,749.0 550.0,748.0 C554.3,747.0 561.0,746.8 566.0,746.0 C571.0,745.2 575.0,743.5 580.0,743.5 C585.0,743.5 591.0,745.5 596.0,746.0 C601.0,746.5 605.3,746.0 610.0,746.5 C614.7,747.0 619.0,747.9 624.0,749.0 C629.0,750.1 634.8,750.8 640.0,753.0 C645.2,755.2 650.3,758.5 655.0,762.0 C659.7,765.5 664.5,770.0 668.0,774.0 C671.5,778.0 674.0,781.7 676.0,786.0 C678.0,790.3 682.7,792.7 680.0,800.0 C677.3,807.3 670.0,816.7 660.0,830.0 C650.0,843.3 630.8,865.9 620.0,880.0 C609.2,894.1 601.7,909.3 595.0,914.5 C588.3,919.7 585.0,912.2 580.0,911.0 C575.0,909.8 570.3,908.8 565.0,907.0 C559.7,905.2 553.5,902.5 548.0,900.0 C542.5,897.5 536.7,894.8 532.0,892.0 C527.3,889.2 523.8,886.2 520.0,883.0 C516.2,879.8 512.3,876.0 509.5,872.5 C506.7,869.0 504.8,865.8 503.0,862.0 C501.2,858.2 500.2,854.0 499.0,850.0 C497.8,846.0 496.8,842.0 496.0,838.0 C495.2,834.0 494.3,830.7 494.5,826.0 Z" fill="#ffffff" stroke="#2a1a1a" stroke-width="3" stroke-linejoin="round"/>
<path transform="translate(561.0,752.0) scale(0.150)" d="M0,22 C-6,16 -30,2 -30,-9 C-30,-20 -20,-25 -13,-25 C-6,-25 -2,-20 0,-15 C2,-20 6,-25 13,-25 C20,-25 30,-20 30,-9 C30,2 6,16 0,22 Z" fill="#ff80f0" stroke="none" stroke-width="0.0"/>
<path transform="translate(631.0,749.0) scale(0.150)" d="M0,22 C-6,16 -30,2 -30,-9 C-30,-20 -20,-25 -13,-25 C-6,-25 -2,-20 0,-15 C2,-20 6,-25 13,-25 C20,-25 30,-20 30,-9 C30,2 6,16 0,22 Z" fill="#ff7070" stroke="none" stroke-width="0.0"/>
<path transform="translate(551.0,778.0) scale(0.150)" d="M0,22 C-6,16 -30,2 -30,-9 C-30,-20 -20,-25 -13,-25 C-6,-25 -2,-20 0,-15 C2,-20 6,-25 13,-25 C20,-25 30,-20 30,-9 C30,2 6,16 0,22 Z" fill="#ff6a6a" stroke="none" stroke-width="0.0"/>
<path transform="translate(603.0,779.0) scale(0.150)" d="M0,22 C-6,16 -30,2 -30,-9 C-30,-20 -20,-25 -13,-25 C-6,-25 -2,-20 0,-15 C2,-20 6,-25 13,-25 C20,-25 30,-20 30,-9 C30,2 6,16 0,22 Z" fill="#ff90f0" stroke="none" stroke-width="0.0"/>
<path transform="translate(593.0,790.0) scale(0.150)" d="M0,22 C-6,16 -30,2 -30,-9 C-30,-20 -20,-25 -13,-25 C-6,-25 -2,-20 0,-15 C2,-20 6,-25 13,-25 C20,-25 30,-20 30,-9 C30,2 6,16 0,22 Z" fill="#e6c0f8" stroke="none" stroke-width="0.0"/>
<path transform="translate(509.0,825.0) scale(0.150)" d="M0,22 C-6,16 -30,2 -30,-9 C-30,-20 -20,-25 -13,-25 C-6,-25 -2,-20 0,-15 C2,-20 6,-25 13,-25 C20,-25 30,-20 30,-9 C30,2 6,16 0,22 Z" fill="#e6c0f8" stroke="none" stroke-width="0.0"/>
<path transform="translate(535.0,823.0) scale(0.150)" d="M0,22 C-6,16 -30,2 -30,-9 C-30,-20 -20,-25 -13,-25 C-6,-25 -2,-20 0,-15 C2,-20 6,-25 13,-25 C20,-25 30,-20 30,-9 C30,2 6,16 0,22 Z" fill="#ff90f0" stroke="none" stroke-width="0.0"/>
<path transform="translate(528.0,861.0) scale(0.150)" d="M0,22 C-6,16 -30,2 -30,-9 C-30,-20 -20,-25 -13,-25 C-6,-25 -2,-20 0,-15 C2,-20 6,-25 13,-25 C20,-25 30,-20 30,-9 C30,2 6,16 0,22 Z" fill="#e6c0f8" stroke="none" stroke-width="0.0"/>
<path transform="translate(550.0,885.0) scale(0.150)" d="M0,22 C-6,16 -30,2 -30,-9 C-30,-20 -20,-25 -13,-25 C-6,-25 -2,-20 0,-15 C2,-20 6,-25 13,-25 C20,-25 30,-20 30,-9 C30,2 6,16 0,22 Z" fill="#ff6a6a" stroke="none" stroke-width="0.0"/>
<path transform="translate(602.0,751.0) scale(0.150)" d="M0,22 C-6,16 -30,2 -30,-9 C-30,-20 -20,-25 -13,-25 C-6,-25 -2,-20 0,-15 C2,-20 6,-25 13,-25 C20,-25 30,-20 30,-9 C30,2 6,16 0,22 Z" fill="#e6c0f8" stroke="none" stroke-width="0.0"/>
<ellipse cx="578.5" cy="844" rx="29" ry="35" fill="#7b5545" stroke="#231510" stroke-width="4"/>
<path d="M573,869 Q567,856 576,848 Q588,842 590,855 Q589,863 582,862" fill="none" stroke="#231510" stroke-width="3.5" stroke-linecap="round"/>
<path d="M610.0,850.0 C610.7,839.3 615.0,825.7 622.0,818.0 C629.0,810.3 642.0,805.0 652.0,804.0 C662.0,803.0 675.0,806.8 682.0,812.0 C689.0,817.2 691.3,825.0 694.0,835.0 C696.7,845.0 698.3,860.8 698.0,872.0 C697.7,883.2 697.0,894.8 692.0,902.0 C687.0,909.2 676.7,914.5 668.0,915.0 C659.3,915.5 648.3,910.5 640.0,905.0 C631.7,899.5 623.0,891.2 618.0,882.0 C613.0,872.8 609.3,860.7 610.0,850.0 Z" fill="#5c2c20" stroke="#231510" stroke-width="2.5"/>
<path d="M600,822 Q625,805 668,798" fill="none" stroke="#231510" stroke-width="9" stroke-linecap="round"/>
<path d="M600,822 Q625,805 668,798" fill="none" stroke="#f4a2f0" stroke-width="5.5" stroke-linecap="round"/>
<path d="M661,802 L634,762 Q650,758 666,790 Z" fill="#f4a2f0" stroke="#231510" stroke-width="2.2" stroke-linejoin="round"/>
<path d="M668,800 L661,764 Q676,770 677,798 Z" fill="#f4a2f0" stroke="#231510" stroke-width="2.2" stroke-linejoin="round"/>
<path d="M612,832 Q608,850 622,862 M615,825 Q640,808 672,815" fill="none" stroke="#ffffff" stroke-width="4" stroke-linecap="round"/>
<path d="M632,838 L648,833 M676,826 L686,828" stroke="#ffffff" stroke-width="2.5" stroke-linecap="round"/>
<path d="M610,872 L640,860" stroke="#ff60e0" stroke-width="3"/>
<path transform="translate(651.0,864.0) scale(0.533)" d="M0,22 C-6,16 -30,2 -30,-9 C-30,-20 -20,-25 -13,-25 C-6,-25 -2,-20 0,-15 C2,-20 6,-25 13,-25 C20,-25 30,-20 30,-9 C30,2 6,16 0,22 Z" fill="#e8283a" stroke="#ff60e0" stroke-width="7.5"/>
<path transform="translate(687.0,848.0) scale(0.367)" d="M0,22 C-6,16 -30,2 -30,-9 C-30,-20 -20,-25 -13,-25 C-6,-25 -2,-20 0,-15 C2,-20 6,-25 13,-25 C20,-25 30,-20 30,-9 C30,2 6,16 0,22 Z" fill="#e8283a" stroke="#ff60e0" stroke-width="10.9"/>
<ellipse cx="654" cy="868" rx="5.5" ry="3.5" fill="#ffb0d8"/><ellipse cx="689" cy="852" rx="3.5" ry="2.5" fill="#ffb0d8"/>
<path d="M606,872 Q612,895 640,906 L662,917 L590,917 Q585,905 590,892 Z" fill="#ffffff" stroke="#231510" stroke-width="2"/>
<path d="M620,904 L660,906 L662,917 L618,917 Z" fill="#f8d8f0"/>
<path d="M690,830 L752,828 Q760,840 757,870 L700,880 Z" fill="#0a0a0a"/>
<path d="M700,835 L745,832 M705,842 L750,845" stroke="#a89292" stroke-width="1.5" fill="none"/>
<path d="M705,918 Q708,892 728,884 Q746,882 752,896 L757,918 Z" fill="#2a1816"/>
<path d="M662.5,918.0 C663.4,914.7 665.1,903.7 668.0,898.0 C670.9,892.3 674.7,887.2 680.0,884.0 C685.3,880.8 694.0,879.2 700.0,878.5 C706.0,877.8 712.3,878.2 716.0,880.0 C719.7,881.8 722.3,884.8 722.0,889.0 C721.7,893.2 714.3,900.2 714.0,905.0 C713.7,909.8 719.0,915.8 720.0,918.0 Z" fill="#1d90ee"/>
<circle cx="703" cy="886" r="1.6" fill="#f8c820"/>
<circle cx="694" cy="897" r="1.6" fill="#f8c820"/>
<circle cx="681" cy="904" r="2.2" fill="#f8c820"/>
<circle cx="698" cy="912" r="2.4" fill="#f8c820"/>
<circle cx="680" cy="915" r="1.3" fill="#f8c820"/>
<circle cx="714" cy="902" r="9" fill="#e6b890" stroke="#2a1816" stroke-width="2"/>
<path d="M711,897 Q718,897 717,903 Q715,908 710,906" fill="none" stroke="#2a1816" stroke-width="1.8"/>
<path transform="translate(735.0,899.0) scale(0.267)" d="M0,22 C-6,16 -30,2 -30,-9 C-30,-20 -20,-25 -13,-25 C-6,-25 -2,-20 0,-15 C2,-20 6,-25 13,-25 C20,-25 30,-20 30,-9 C30,2 6,16 0,22 Z" fill="#e8283a" stroke="#ff60e0" stroke-width="9.4"/>
<path transform="translate(752.0,893.0) scale(0.167)" d="M0,22 C-6,16 -30,2 -30,-9 C-30,-20 -20,-25 -13,-25 C-6,-25 -2,-20 0,-15 C2,-20 6,-25 13,-25 C20,-25 30,-20 30,-9 C30,2 6,16 0,22 Z" fill="#e8283a" stroke="#ff60e0" stroke-width="12.0"/>
<path d="M713,887 Q716,874 737,871 Q742,878 738,884 Q728,891 713,887 Z" fill="#ff3fa0"/>
<path d="M724,885 Q728,878 733,877" stroke="#f8c820" stroke-width="1.5" fill="none"/>
<ellipse cx="424.0" cy="1076.0" rx="76.0" ry="72.0" fill="#a8389a"/><circle cx="424.0" cy="1082.0" r="70.0" fill="#0d0b0b" stroke="#2b1d1d" stroke-width="4"/><circle cx="425.0" cy="1081.0" r="37.5" fill="#e6b6c8" stroke="#2a1a1a" stroke-width="4"/><path transform="translate(424.0,1089.0) scale(1.033)" d="M0,22 C-6,16 -30,2 -30,-9 C-30,-20 -20,-25 -13,-25 C-6,-25 -2,-20 0,-15 C2,-20 6,-25 13,-25 C20,-25 30,-20 30,-9 C30,2 6,16 0,22 Z" fill="#e800b2" stroke="#2a1010" stroke-width="3.4"/>
<ellipse cx="950.0" cy="1072.0" rx="77.0" ry="73.0" fill="#a8389a"/><circle cx="950.0" cy="1078.0" r="71.0" fill="#0d0b0b" stroke="#2b1d1d" stroke-width="4"/><circle cx="951.0" cy="1080.0" r="37.5" fill="#e6b6c8" stroke="#2a1a1a" stroke-width="4"/><path transform="translate(950.0,1088.0) scale(1.033)" d="M0,22 C-6,16 -30,2 -30,-9 C-30,-20 -20,-25 -13,-25 C-6,-25 -2,-20 0,-15 C2,-20 6,-25 13,-25 C20,-25 30,-20 30,-9 C30,2 6,16 0,22 Z" fill="#e800b2" stroke="#2a1010" stroke-width="3.4"/>
<path d="M290.0,1092.0 C289.2,1084.5 287.5,1063.7 285.0,1047.0 C282.5,1030.3 275.8,1005.5 275.0,992.0 C274.2,978.5 277.2,973.8 280.0,966.0 C282.8,958.2 288.5,951.8 292.0,945.0 C295.5,938.2 298.3,932.2 301.0,925.0 C303.7,917.8 304.3,910.2 308.0,902.0 C311.7,893.8 316.8,883.3 323.0,876.0 C329.2,868.7 337.8,861.6 345.0,858.0 C352.2,854.4 355.6,857.2 366.0,854.2 C376.4,851.2 392.2,844.7 407.5,840.0 C422.8,835.3 443.4,829.2 457.5,826.0 C471.6,822.8 486.2,821.8 492.0,821.0 L492.0,821.0 C488.3,823.3 474.8,829.2 470.0,835.0 C465.2,840.8 463.0,848.5 463.0,856.0 C463.0,863.5 465.2,872.3 470.0,880.0 C474.8,887.7 480.3,896.2 492.0,902.0 C503.7,907.8 513.7,912.3 540.0,915.0 C566.3,917.7 613.3,916.8 650.0,918.0 C686.7,919.2 733.3,920.5 760.0,922.0 C786.7,923.5 801.7,926.2 810.0,927.0 L810.0,927.0 C820.0,924.5 856.2,919.8 870.0,912.0 C883.8,904.2 888.3,889.0 893.0,880.0 C897.7,871.0 900.2,866.3 898.0,858.0 C895.8,849.7 884.9,836.9 880.0,830.0 C875.1,823.1 870.6,818.9 868.7,816.7 L868.7,816.7 C881.2,817.8 917.6,818.2 943.4,823.3 C969.2,828.4 999.0,837.2 1023.4,847.4 C1047.8,857.6 1072.2,870.9 1090.0,884.7 C1107.8,898.5 1121.5,918.0 1130.0,930.0 C1138.5,942.0 1138.1,945.6 1140.8,956.7 C1143.5,967.8 1146.5,982.8 1146.0,996.7 C1145.5,1010.6 1142.0,1024.0 1138.0,1040.0 C1134.0,1056.0 1124.7,1084.0 1122.0,1092.8 L1028.8,1099.4 L1023.4,1098.0 C1022.5,1091.3 1024.7,1071.8 1018.0,1058.0 C1011.3,1044.2 995.8,1025.2 983.4,1015.4 C971.0,1005.6 956.7,1000.3 943.4,999.4 C930.1,998.5 913.6,1002.9 903.4,1010.0 C893.2,1017.1 886.5,1028.7 882.0,1042.0 C877.5,1055.3 877.6,1082.0 876.7,1090.0 L499,1094 L499.0,1094.0 C498.7,1088.5 501.8,1073.8 497.0,1061.0 C492.2,1048.2 482.3,1026.8 470.0,1017.0 C457.7,1007.2 438.3,1002.0 423.0,1002.0 C407.7,1002.0 390.8,1007.3 378.0,1017.0 C365.2,1026.7 351.3,1047.3 346.0,1060.0 C340.7,1072.7 346.0,1087.5 346.0,1093.0 Z" fill="#ff86e3" stroke="#0c0c0c" stroke-width="4.5" stroke-linejoin="round"/>
<path d="M309.0,928.5 C324.2,925.8 371.2,917.0 400.0,912.0 C428.8,907.0 468.3,900.8 482.0,898.6" stroke="#0c0c0c" fill="none" stroke-linecap="round" stroke-width="3.5"/>
<path d="M307.5,923.0 C310.6,917.5 319.8,898.7 326.0,890.0 C332.2,881.3 338.5,875.6 345.0,871.0 C351.5,866.4 361.7,863.9 365.0,862.5" stroke="#0c0c0c" fill="none" stroke-linecap="round" stroke-width="2.5"/>
<path d="M289.6,1049.0 C293.3,1049.3 304.2,1050.8 312.0,1051.0 C319.8,1051.2 332.3,1050.2 336.4,1050.0" stroke="#0c0c0c" fill="none" stroke-linecap="round" stroke-width="2.5"/>
<path d="M336.4,1044.0 C340.7,1037.2 348.4,1013.5 362.0,1003.0 C375.6,992.5 399.8,983.1 417.8,981.3 C435.8,979.5 455.6,984.4 470.0,992.0 C484.4,999.6 498.3,1021.1 504.0,1026.9" stroke="#0c0c0c" fill="none" stroke-linecap="round" stroke-width="3.5"/>
<path d="M553.0,921.0 C551.3,925.5 545.2,938.2 543.0,948.0 C540.8,957.8 538.5,967.2 540.0,980.0 C541.5,992.8 545.3,1013.0 552.0,1025.0 C558.7,1037.0 570.0,1045.2 580.0,1052.0 C590.0,1058.8 606.7,1063.7 612.0,1066.0" stroke="#0c0c0c" fill="none" stroke-linecap="round" stroke-width="3.5"/>
<path d="M520.0,1066.0 C533.3,1066.3 570.0,1067.3 600.0,1068.0 C630.0,1068.7 669.5,1069.5 700.0,1070.0 C730.5,1070.5 758.8,1071.5 783.0,1071.0 C807.2,1070.5 834.7,1067.7 845.0,1067.0" stroke="#0c0c0c" fill="none" stroke-linecap="round" stroke-width="3"/>
<path d="M794.0,937.0 C792.5,941.7 787.2,954.5 785.0,965.0 C782.8,975.5 781.2,987.5 780.7,1000.0 C780.2,1012.5 781.5,1028.5 782.0,1040.0 C782.5,1051.5 783.2,1063.9 783.4,1068.7" stroke="#0c0c0c" fill="none" stroke-linecap="round" stroke-width="3.5"/>
<path d="M863.4,1042.0 C867.8,1035.3 876.7,1012.4 890.0,1002.0 C903.3,991.6 925.6,981.2 943.4,979.4 C961.2,977.6 982.1,983.6 996.8,991.4 C1011.5,999.2 1025.6,1020.2 1031.4,1026.0" stroke="#0c0c0c" fill="none" stroke-linecap="round" stroke-width="3.5"/>
<path d="M842.0,927.4 C854.5,931.4 890.9,945.8 916.7,951.4 C942.5,957.0 973.2,958.0 996.8,960.7 C1020.3,963.4 1047.8,966.3 1058.0,967.4" stroke="#0c0c0c" fill="none" stroke-linecap="round" stroke-width="4"/>
<path d="M1124.8,978.0 C1126.5,975.8 1132.3,969.4 1135.0,965.0 C1137.7,960.6 1139.8,953.7 1140.8,951.4" stroke="#0c0c0c" fill="none" stroke-linecap="round" stroke-width="3"/>
<path d="M1060.8,1086.0 C1064.0,1085.9 1072.9,1085.5 1080.0,1085.5 C1087.1,1085.5 1099.6,1085.9 1103.5,1086.0" stroke="#0c0c0c" fill="none" stroke-linecap="round" stroke-width="2.5"/>
<path d="M561,951 L604,952.5 Q610,953.5 610,957 Q609,960.5 603,961 L561,960 Q556,959.5 556,955.5 Q556.5,951.5 561,951 Z" fill="#e4e4e4" stroke="#0c0c0c" stroke-width="2"/>
<ellipse cx="1093" cy="991" rx="33" ry="27" transform="rotate(28 1093 991)" fill="#efefef" stroke="#0c0c0c" stroke-width="3.2"/>
<path d="M1070,983 Q1072,970 1090,972 Q1100,978 1094,988" fill="none" stroke="#b8b8b8" stroke-width="2.5"/>
<path d="M868.0,816.4 C871.0,818.2 881.0,822.0 886.0,827.0 C891.0,832.0 895.4,840.0 898.0,846.4 C900.6,852.8 901.7,859.0 901.7,865.6 C901.7,872.2 900.6,879.6 898.0,886.0 C895.4,892.4 892.0,898.6 886.0,904.0 C880.0,909.4 868.0,915.1 862.0,918.5 C856.0,921.9 852.0,923.5 850.0,924.5 L826,924.5 L868,892 L881,844 Z" fill="#1f1d24" stroke="#0c0c0c" stroke-width="4" stroke-linejoin="round"/>
<defs><clipPath id="gl"><path d="M788.8,775.6 L868,816.4 L868.0,816.4 C870.0,818.2 877.8,822.4 880.0,827.0 C882.2,831.6 881.7,837.2 881.3,844.0 C880.9,850.8 879.9,860.0 877.7,868.0 C875.5,876.0 872.6,884.4 868.0,892.0 C863.4,899.6 857.0,908.3 850.0,913.7 C843.0,919.1 833.6,922.1 826.0,924.5 C818.4,926.9 808.0,927.4 804.4,928.0 L804.4,928.0 C800.0,923.6 785.4,909.6 778.0,901.6 C770.6,893.6 764.0,886.0 760.0,880.0 C756.0,874.0 754.8,872.6 754.0,865.6 C753.2,858.6 754.0,847.0 755.2,838.0 C756.4,829.0 758.4,819.4 761.2,811.6 C764.0,803.8 767.4,797.2 772.0,791.2 C776.6,785.2 786.0,778.2 788.8,775.6 Z"/></clipPath></defs>
<g clip-path="url(#gl)"><rect x="740" y="760" width="170" height="180" fill="#58545a"/>
<path d="M740,760 L900,760 L900,818 L860,808 Q840,812 826,826 L798,824 Q790,812 780,818 L740,822 Z" fill="#f3f3f3"/>
<path d="M826,826 Q845,806 870,812 Q885,830 880,870 Q870,905 840,926 L800,930 Q812,900 812,870 Q815,840 826,826 Z" fill="#956680"/>
<path d="M776,822 Q790,810 798,826 L812,870 Q812,900 800,930 L790,912 Z" fill="#7c5a6e" stroke="#6e6468" stroke-width="2"/>
<circle cx="773" cy="853.6" r="13" fill="#8a6e62" stroke="#5e5456" stroke-width="2"/>
<path d="M778,832 L790,815 M770,878 L772,892" stroke="#e8a0c8" stroke-width="3.5" stroke-linecap="round"/>
<path d="M800,829 L812,826 L810,842 Z" fill="#c0607c"/></g>
<path d="M788.8,775.6 L868,816.4 L868.0,816.4 C870.0,818.2 877.8,822.4 880.0,827.0 C882.2,831.6 881.7,837.2 881.3,844.0 C880.9,850.8 879.9,860.0 877.7,868.0 C875.5,876.0 872.6,884.4 868.0,892.0 C863.4,899.6 857.0,908.3 850.0,913.7 C843.0,919.1 833.6,922.1 826.0,924.5 C818.4,926.9 808.0,927.4 804.4,928.0 L804.4,928.0 C800.0,923.6 785.4,909.6 778.0,901.6 C770.6,893.6 764.0,886.0 760.0,880.0 C756.0,874.0 754.8,872.6 754.0,865.6 C753.2,858.6 754.0,847.0 755.2,838.0 C756.4,829.0 758.4,819.4 761.2,811.6 C764.0,803.8 767.4,797.2 772.0,791.2 C776.6,785.2 786.0,778.2 788.8,775.6 Z" fill="none" stroke="#0c0c0c" stroke-width="4.2" stroke-linejoin="round"/>
<path d="M769,918 L792,931 L769,936 Z" fill="#d84cc8"/>
<defs><clipPath id="mir"><ellipse cx="740" cy="934.5" rx="29" ry="20" transform="rotate(-6 740 934.5)"/></clipPath></defs>
<ellipse cx="740" cy="934.5" rx="29" ry="20" transform="rotate(-6 740 934.5)" fill="#ff86e3"/>
<path clip-path="url(#mir)" d="M735,960 Q762,950 770,925 L790,925 L790,965 Z" fill="#d84cc8"/>
<ellipse cx="740" cy="934.5" rx="29" ry="20" transform="rotate(-6 740 934.5)" fill="none" stroke="#0c0c0c" stroke-width="3.5"/>
<path d="M769,935.5 L793,937.5" stroke="#0c0c0c" stroke-width="3.5"/>
</g>
<!--/CANVAS-->
</svg>
</body></html>
